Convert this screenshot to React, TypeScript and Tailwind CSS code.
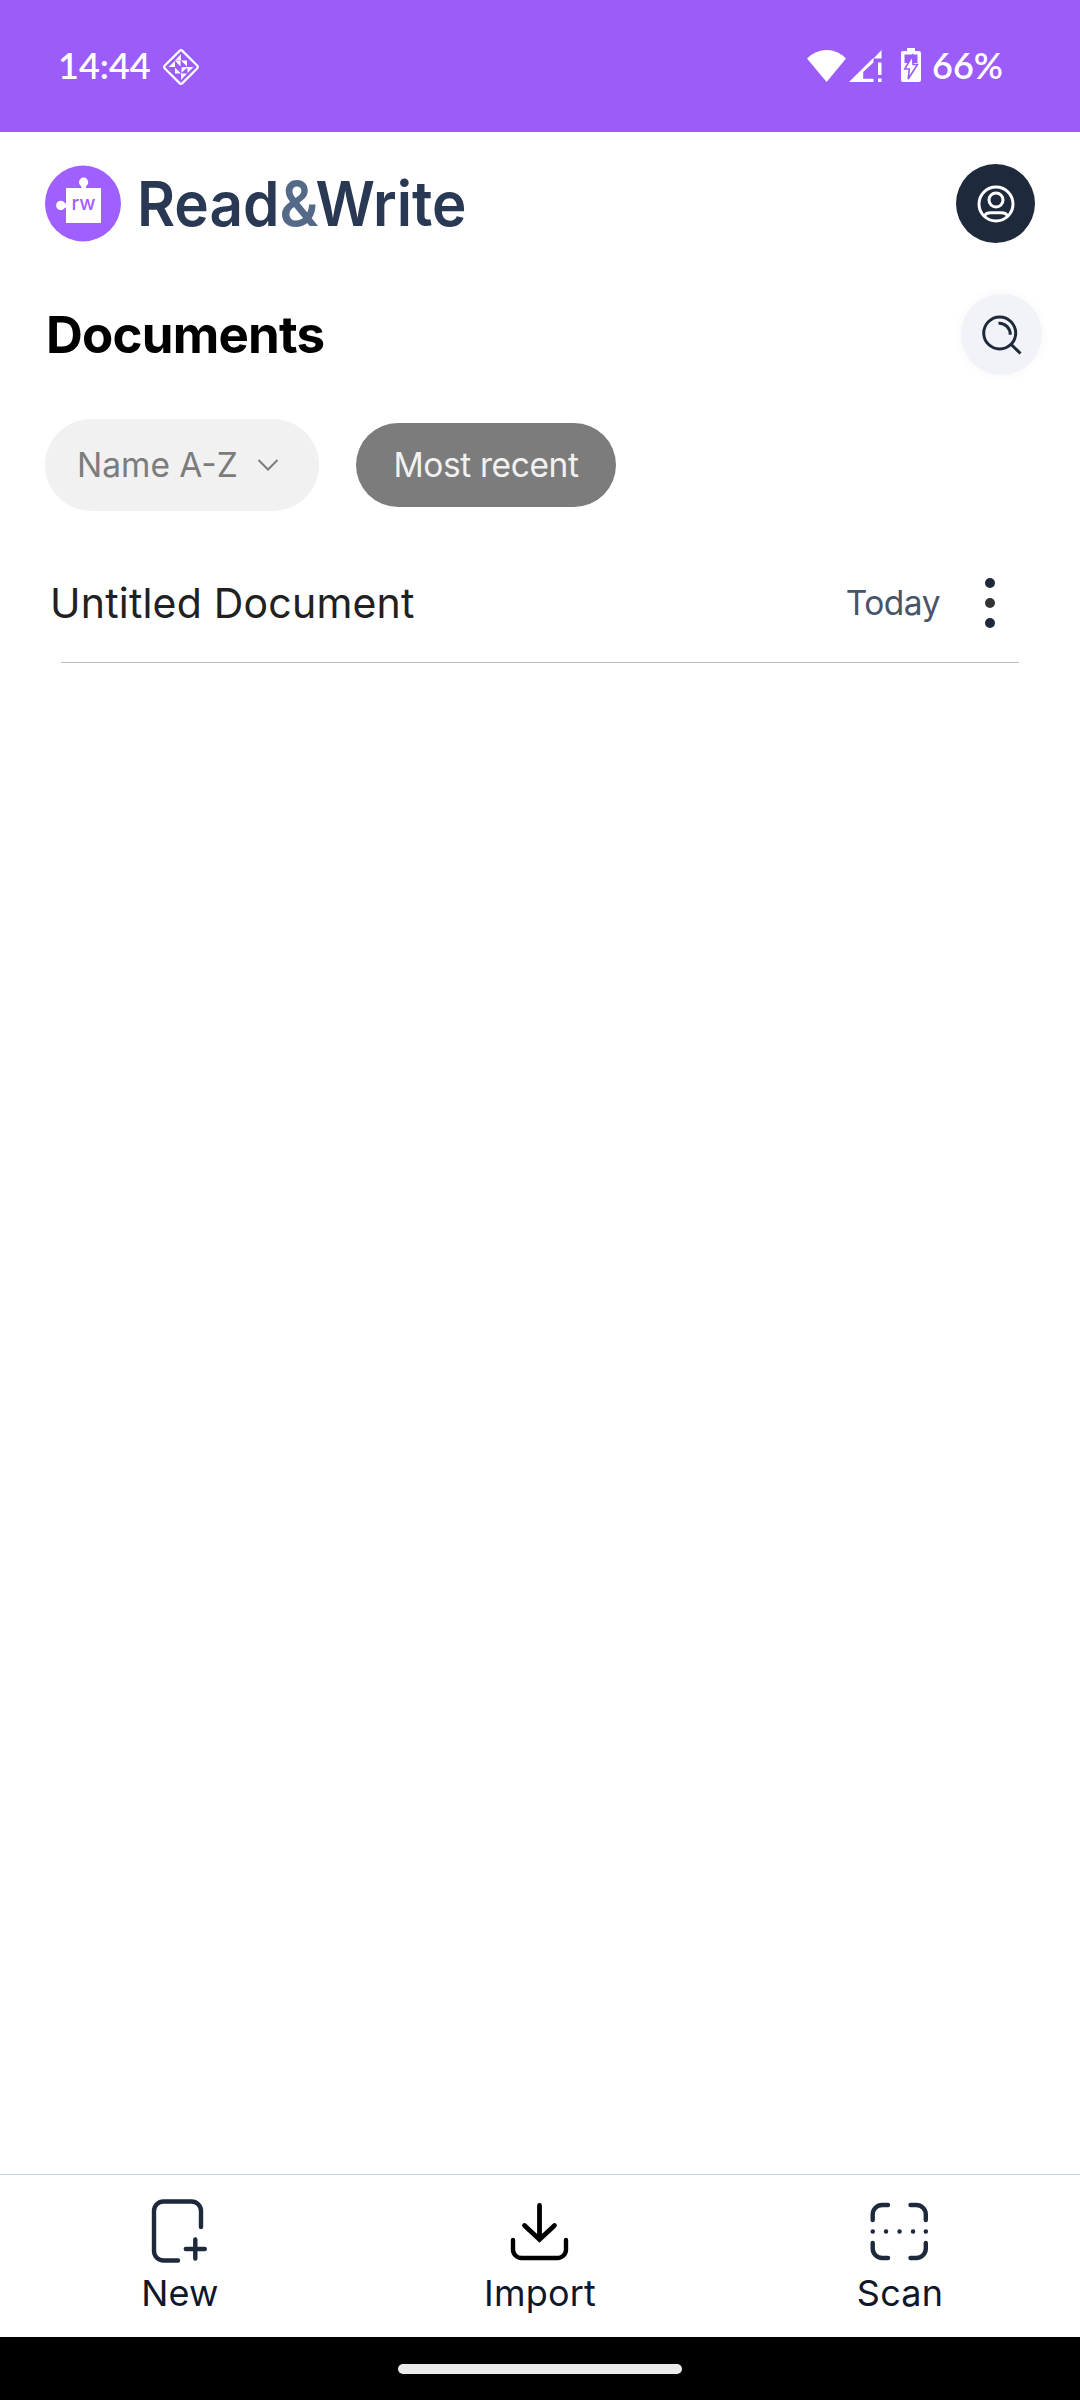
import type { ReactNode } from "react";

type Doc = {
    title: string;
    date: string;
};

const docs: Doc[] = [{ title: "Untitled Document", date: "Today" }];

/* ---------- status bar ---------- */

function DiamondIcon() {
    return (
        <svg viewBox="0 0 38 38" className="h-[38px] w-[38px]" fill="none">
            <rect
                x="6.6"
                y="6.6"
                width="24.8"
                height="24.8"
                rx="2"
                transform="rotate(45 19 19)"
                stroke="#fff"
                strokeWidth="2.2"
            />
            {/* pinwheel */}
            <g fill="#fff">
                <path d="M19 6v6.5h-6zM19 12.5h6v6l-6-6z" />
                <path d="M6.5 19l6.5-6v6zM13 12.8h5.5v5.7z" />
                <path d="M19 19h12.5l-6 6v-4.5zM19 25.5h6l-6 6.5z" />
                <path d="M13 19.5l6 6h-6zM19.5 19.5v5.5l5.5-5.5z" />
            </g>
        </svg>
    );
}

function WifiIcon() {
    return (
        <svg viewBox="0 0 40 34" className="h-[34px] w-10" fill="#fff">
            <path d="M0 9.5Q8.5 1 19.6 1Q30.8 1 39 9.5L19.6 33z" />
        </svg>
    );
}

function SignalIcon() {
    return (
        <svg viewBox="0 0 34 34" className="h-[34px] w-[34px]" fill="#fff">
            <path d="M0 33L24.5 8.7v4.8L14.2 23v6.8h10.3V33z" />
            <path d="M32.5 1v8.5h-8z" />
            <path d="M29 13.5h3.5V26H29zM29 29.5h3.5V33H29z" />
        </svg>
    );
}

function BatteryIcon() {
    return (
        <svg viewBox="0 0 20 34" className="h-[34px] w-5">
            <path
                d="M6 0h8v3h4a2 2 0 0 1 2 2v27a2 2 0 0 1-2 2H2a2 2 0 0 1-2-2V5a2 2 0 0 1 2-2h4z"
                fill="#fff"
            />
            <path d="M3.5 6.5h13v8.5h-13z" fill="#9b5cf9" />
            <path
                d="M11.5 7.5L3.8 21h4.5L7.2 31L16.5 16.5H12z"
                fill="#fff"
                stroke="#9b5cf9"
                strokeWidth="1.6"
            />
        </svg>
    );
}

function StatusBar() {
    return (
        <div className="flex h-[132px] items-center justify-between bg-[#9b5cf9] pr-[77px] pl-[58px] font-['Lato',sans-serif] font-semibold text-white">
            <div className="flex items-center">
                <span className="pb-0.5 text-[36px] leading-10">14:44</span>
                <span className="mt-[2px] ml-[11px]">
                    <DiamondIcon />
                </span>
            </div>
            <div className="flex items-center">
                <WifiIcon />
                <span className="ml-[2px]">
                    <SignalIcon />
                </span>
                <span className="mx-[18px] mb-0.5">
                    <BatteryIcon />
                </span>
                <span className="-ml-[7px] w-[71px] pb-0.5 text-[36px] leading-10">
                    66%
                </span>
            </div>
        </div>
    );
}

/* ---------- header ---------- */

function Logo() {
    return (
        <svg
            viewBox="0 0 426 78"
            className="h-[78px] w-[426px] overflow-visible font-semibold"
            role="img"
            aria-label="Read&Write"
        >
            <circle cx="38" cy="38.5" r="38" fill="#a05fff" />
            <g fill="#fff">
                <path d="M21 23h35v35H21z" />
                <circle cx="38.6" cy="17.2" r="4.6" />
                <path d="M36 19.5h5.4l-.6 4h-4.2z" />
                <circle cx="15.8" cy="40.5" r="4.7" />
                <path d="M18 38l4 .6v3.8l-4 .6z" />
            </g>
            <text
                x="26.5"
                y="45.3"
                fontSize="20"
                fill="#a05fff"
                className="font-medium"
                textLength="24"
                lengthAdjust="spacingAndGlyphs"
            >
                rw
            </text>
            <g fontSize="62" fill="#293853">
                <text
                    x="92"
                    y="61"
                    textLength="142.5"
                    lengthAdjust="spacingAndGlyphs"
                >
                    Read
                </text>
                <text
                    x="234.5"
                    y="61"
                    fill="#546a88"
                    textLength="39"
                    lengthAdjust="spacingAndGlyphs"
                >
                    &amp;
                </text>
                <text
                    x="270.5"
                    y="61"
                    textLength="151"
                    lengthAdjust="spacingAndGlyphs"
                >
                    Write
                </text>
            </g>
        </svg>
    );
}

function Header() {
    return (
        <header className="flex h-[143px] items-center justify-between px-[45px]">
            <Logo />
            <button
                type="button"
                aria-label="Account"
                className="flex h-[79px] w-[79px] items-center justify-center rounded-full bg-[#1e293b]"
            >
                <svg
                    viewBox="-20 -20 40 40"
                    className="h-10 w-10"
                    fill="none"
                    stroke="#fff"
                    strokeWidth="3"
                >
                    <circle r="17" />
                    <circle cy="-4" r="7" />
                    <path d="M-11.5 11.5Q-9.5 8.7-5.5 8.7h11Q9.5 8.7 11.5 11.5" />
                </svg>
            </button>
        </header>
    );
}

function TitleRow() {
    return (
        <div className="flex h-[119px] items-center justify-between pr-[38px] pl-[46px]">
            <h1 className="text-[51px] leading-[60px] font-bold tracking-[-0.8px] text-black">
                Documents
            </h1>
            <button
                type="button"
                aria-label="Search"
                className="flex h-[81px] w-[81px] items-center justify-center rounded-full bg-[#f1f3f8] shadow-[0_0_12px_rgba(0,0,0,0.04)]"
            >
                <svg
                    viewBox="-22 -22 44 44"
                    className="h-11 w-11"
                    fill="none"
                    stroke="#1e293b"
                    strokeWidth="3"
                >
                    <circle cx="-2.3" cy="-2" r="16" />
                    <path d="M9.3 9.5l9.2 9M-3.5-11.8A11 11 0 0 1 8.2-.3" />
                </svg>
            </button>
        </div>
    );
}

function SortRow() {
    return (
        <div className="flex h-[142px] items-center gap-[37px] pl-[45px] text-[33.5px] leading-10">
            <button
                type="button"
                className="flex h-[92px] w-[274px] items-center rounded-full bg-[#f1f1f1] pl-8 text-[#7c7c7c]"
            >
                <span>Name A-Z</span>
                <svg
                    viewBox="0 0 22 14"
                    className="ml-[19px] h-[14px] w-[22px]"
                    fill="none"
                    stroke="currentColor"
                    strokeWidth="2"
                >
                    <path d="M1.5 2l9.5 9.5L20.5 2" />
                </svg>
            </button>
            <button
                type="button"
                className="h-[84px] w-[260px] rounded-full bg-[#7c7c7c] tracking-[-0.4px] text-[#f1f1f1]"
            >
                Most recent
            </button>
        </div>
    );
}

/* ---------- list ---------- */

function DocRow({ title, date }: Doc) {
    return (
        <li>
            <div className="flex h-[126px] items-center pt-2 pr-[85px] pl-[50px]">
                <span className="flex-1 text-[41px] leading-[50px] tracking-[0.2px] text-[#212121]">
                    {title}
                </span>
                <span className="text-[33.5px] leading-10 tracking-[-0.5px] text-[#475569]">
                    {date}
                </span>
                <button
                    type="button"
                    aria-label="More"
                    className="ml-[45px] flex w-[10px] flex-col gap-[10px]"
                >
                    <span className="h-[10px] rounded-full bg-[#1e293b]" />
                    <span className="h-[10px] rounded-full bg-[#333333]" />
                    <span className="h-[10px] rounded-full bg-[#1e293b]" />
                </button>
            </div>
            <div className="mx-[61px] h-px bg-[#bdbdbd]" />
        </li>
    );
}

/* ---------- bottom nav ---------- */

function NavItem({ label, children }: { label: string; children: ReactNode }) {
    return (
        <button
            type="button"
            className="flex flex-1 flex-col items-center gap-1.5 pt-5"
        >
            <svg
                viewBox="0 0 72 72"
                className="h-[72px] w-[72px]"
                fill="none"
                stroke="#1e293b"
                strokeWidth="4.4"
                strokeLinecap="round"
            >
                {children}
            </svg>
            <span className="text-[36px] leading-10 tracking-[0.2px] text-[#0f172a]">
                {label}
            </span>
        </button>
    );
}

function BottomNav() {
    return (
        <nav className="flex h-[163px] border-t border-[#cbd5e1]">
            <NavItem label="New">
                <path d="M57 32V16a9.5 9.5 0 0 0-9.5-9.5H19.5A9.5 9.5 0 0 0 10 16v40a9.5 9.5 0 0 0 9.5 9.5H34M51.3 44.5v19M41.8 54h19" />
            </NavItem>
            <NavItem label="Import">
                <g stroke="#000">
                    <path
                        d="M35.5 10.5v34M20.5 30.5l15 14 15-14"
                        strokeWidth="4.8"
                    />
                    <path d="M9 45v9.5a8.5 8.5 0 0 0 8.5 8.500h36a8.5 8.5 0 0 0 8.5-8.5V45" />
                </g>
            </NavItem>
            <NavItem label="Scan">
                <path d="M8.7 25v-5.5A9.5 9.5 0 0 1 18.2 10H24M46.5 10h5.8a9.5 9.5 0 0 1 9.5 9.5V25M61.8 48v5.5a9.5 9.5 0 0 1-9.5 9.5h-5.8M24 63h-5.8a9.5 9.5 0 0 1-9.5-9.5V48" />
                <path d="M8.7 36.5h.1M22 36.5h.1M35.5 36.5h.1M49 36.5h.1M61.8 36.5h.1" />
            </NavItem>
        </nav>
    );
}

export default function App() {
    return (
        <div className="flex h-[2400px] w-[1080px] flex-col bg-white font-['Inter',sans-serif]">
            <StatusBar />
            <Header />
            <main className="flex-1">
                <TitleRow />
                <SortRow />
                <ul>
                    {docs.map((doc) => (
                        <DocRow key={doc.title} {...doc} />
                    ))}
                </ul>
            </main>
            <BottomNav />
            {/* system gesture bar */}
            <div className="flex h-[63px] items-center justify-center bg-black">
                <div className="h-[10px] w-[284px] rounded-full bg-[#ebebeb]" />
            </div>
        </div>
    );
}
